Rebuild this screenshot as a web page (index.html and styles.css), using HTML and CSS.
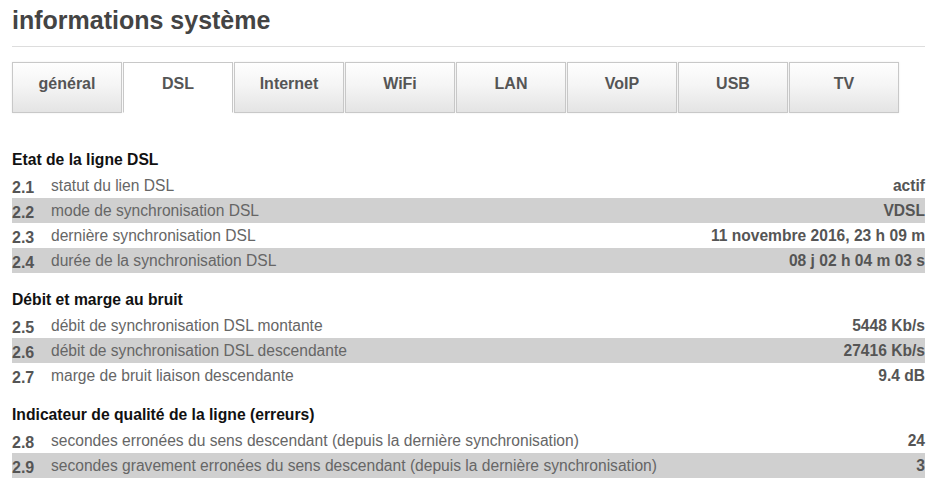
FILE: index.html
```html
<!DOCTYPE html>
<html lang="fr">
<head>
<meta charset="utf-8">
<title>informations système</title>
<link rel="stylesheet" href="styles.css">
</head>
<body>
<div class="page">
  <h1 class="title">informations système</h1>
  <nav class="tabs">
    <div class="tab">général</div>
    <div class="tab active">DSL</div>
    <div class="tab">Internet</div>
    <div class="tab">WiFi</div>
    <div class="tab">LAN</div>
    <div class="tab">VoIP</div>
    <div class="tab">USB</div>
    <div class="tab">TV</div>
  </nav>

  <section class="section first">
    <h2 class="section-title">Etat de la ligne DSL</h2>
    <div class="row"><span class="num">2.1</span><span class="label">statut du lien DSL</span><span class="value">actif</span></div>
    <div class="row alt"><span class="num">2.2</span><span class="label">mode de synchronisation DSL</span><span class="value">VDSL</span></div>
    <div class="row"><span class="num">2.3</span><span class="label">dernière synchronisation DSL</span><span class="value">11 novembre 2016, 23 h 09 m</span></div>
    <div class="row alt"><span class="num">2.4</span><span class="label">durée de la synchronisation DSL</span><span class="value">08 j 02 h 04 m 03 s</span></div>
  </section>

  <section class="section">
    <h2 class="section-title">Débit et marge au bruit</h2>
    <div class="row"><span class="num">2.5</span><span class="label">débit de synchronisation DSL montante</span><span class="value">5448 Kb/s</span></div>
    <div class="row alt"><span class="num">2.6</span><span class="label">débit de synchronisation DSL descendante</span><span class="value">27416 Kb/s</span></div>
    <div class="row"><span class="num">2.7</span><span class="label">marge de bruit liaison descendante</span><span class="value">9.4 dB</span></div>
  </section>

  <section class="section">
    <h2 class="section-title">Indicateur de qualité de la ligne (erreurs)</h2>
    <div class="row"><span class="num">2.8</span><span class="label">secondes erronées du sens descendant (depuis la dernière synchronisation)</span><span class="value">24</span></div>
    <div class="row alt"><span class="num">2.9</span><span class="label">secondes gravement erronées du sens descendant (depuis la dernière synchronisation)</span><span class="value">3</span></div>
  </section>
</div>
</body>
</html>
```

FILE: styles.css
```css
html, body {
  margin: 0;
  padding: 0;
  background: #ffffff;
}

body {
  font-family: "Liberation Sans", Arial, sans-serif;
  color: #555555;
}

.page {
  width: 913px;
  padding: 0 12px;
}

.title {
  margin: 0;
  padding: 6px 0 12px;
  font-size: 25px;
  line-height: 28px;
  font-weight: bold;
  color: #444444;
  border-bottom: 1px solid #dddddd;
}

.tabs {
  display: flex;
  gap: 1px;
  margin-top: 15px;
}

.tab {
  box-sizing: border-box;
  width: 110px;
  height: 51px;
  padding-top: 11px;
  text-align: center;
  font-size: 16px;
  line-height: 20px;
  font-weight: bold;
  color: #555555;
  border: 1px solid #c8c8c8;
  background: linear-gradient(to bottom, #fefefe 0%, #f5f5f5 45%, #e4e4e4 100%);
  box-shadow: 0 0 2px rgba(0, 0, 0, 0.08);
}

.tab.active {
  background: #ffffff;
  border-bottom-color: #ffffff;
  box-shadow: none;
}

.section {
  margin-top: 15px;
}

.section.first {
  margin-top: 35px;
}

.section-title {
  margin: 0;
  padding-top: 2px;
  padding-bottom: 3px;
  font-size: 15.7px;
  line-height: 20px;
  font-weight: bold;
  color: #111111;
}

.row {
  display: flex;
  align-items: center;
  height: 25px;
  font-size: 15.6px;
}

.row.alt {
  background: #d0d0d0;
}

.num {
  width: 39px;
  flex: none;
  padding-top: 4px;
  font-size: 16px;
  font-weight: bold;
  color: #555555;
}

.label {
  flex: 1;
  color: #666666;
}

.value {
  flex: none;
  font-weight: bold;
  color: #555555;
  text-align: right;
}
```
